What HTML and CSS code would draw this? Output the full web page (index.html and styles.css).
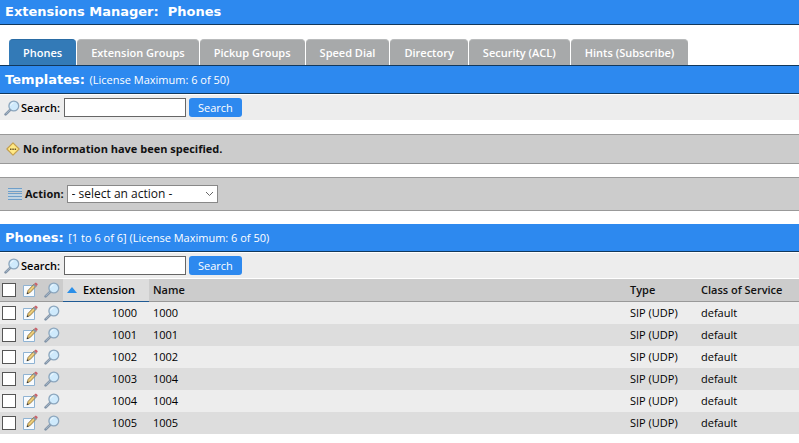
FILE: index.html
```html
<!DOCTYPE html>
<html lang="en">
<head>
  <meta charset="UTF-8" />
  <title>Extensions Manager</title>
  <link rel="stylesheet" href="styles.css">
</head>
<body>

  <!-- Shared icons -->
  <svg class="icon-defs" width="0" height="0">
    <symbol id="icon-search" viewBox="0 0 16 16">
      <path d="M1.6 14.4L6.2 9.8" stroke="#8294a8" stroke-width="2.6" stroke-linecap="round" />
      <path d="M1.8 14L6 9.8" stroke="#b3c3d2" stroke-width="0.8" />
      <circle cx="9.8" cy="6" r="4.9" fill="#cfeafc" stroke="#8ca6bd" stroke-width="1.3" />
      <path d="M6.6 5.6a3.3 3.3 0 0 1 3-2.8" fill="none" stroke="#f2faff" stroke-width="1" />
    </symbol>
    <symbol id="icon-edit" viewBox="0 0 16 16">
      <path d="M1.5 3.5h11v11h-11z" fill="#f8fbfe" stroke="#8fb3d3" />
      <path d="M5 11.8l1-3.4 6-6.4 2.2 2.1-6 6.4z" fill="#e3bd62" stroke="#7d6840" stroke-width="0.7" />
      <path d="M7.2 9.3l5.6-6" stroke="#f7e3a0" stroke-width="0.8" />
      <path d="M10.8 3.2l1.5-1.5 2.3 2.3-1.5 1.5z" fill="#8c98a4" />
      <path d="M12.2 1.8l0.9-0.9q0.7-0.6 1.4 0l0.9 0.9q0.6 0.7 0.1 1.3l-0.9 1z" fill="#c9606a" />
      <path d="M4.7 12.2l0.6-2 1.5 1.4z" fill="#333" />
    </symbol>
  </svg>

  <h1 class="bar page-title">Extensions Manager:&nbsp; Phones</h1>

  <nav class="tabs">
    <a class="tab active" href="#phones">Phones</a>
    <a class="tab" href="#groups">Extension Groups</a>
    <a class="tab" href="#pickup">Pickup Groups</a>
    <a class="tab" href="#speed-dial">Speed Dial</a>
    <a class="tab" href="#directory">Directory</a>
    <a class="tab" href="#security">Security (ACL)</a>
    <a class="tab" href="#hints">Hints (Subscribe)</a>
  </nav>

  <!-- Templates Section -->
  <section class="templates">
    <h2 class="bar">Templates: <span class="info">(License Maximum: 6 of 50)</span></h2>
    <form class="search">
      <svg class="icon"><use href="#icon-search" /></svg>
      <label for="template-search">Search:</label>
      <input type="text" id="template-search" />
      <button type="submit">Search</button>
    </form>
    <div class="message">
      <svg class="icon-note" viewBox="0 0 14 14">
        <path d="M7 0.9L13.1 7 7 13.1 0.9 7z" fill="#ffe985" stroke="#c6a04c" stroke-width="1.2" stroke-linejoin="round" />
        <path d="M4 6.4h1.5v1.5H4zM6.3 6.4h1.5v1.5H6.3zM8.6 6.4h1.5v1.5H8.6z" fill="#6b5526" />
      </svg>
      <span>No information have been specified.</span>
    </div>
    <div class="action">
      <svg class="icon-list" viewBox="0 0 14 12">
        <path d="M0 0.5h14M0 3.5h14M0 5.5h14M0 8.5h14M0 11.5h14" stroke="#6f9fc9" />
        <path d="M0 1.5h14v1H0zM0 6.5h14v1H0zM0 9.5h14v1H0z" fill="#b5d9f5" />
      </svg>
      <label for="action">Action:</label>
      <span class="select-wrap">
        <select id="action">
          <option>- select an action -</option>
        </select>
        <svg class="chevron" viewBox="0 0 9 6"><path d="M1 1l3.5 3.5L8 1" fill="none" stroke="#666" /></svg>
      </span>
    </div>
  </section>

  <!-- Phones Section -->
  <section class="phones">
    <h2 class="bar">Phones: <span class="info">[1 to 6 of 6] (License Maximum: 6 of 50)</span></h2>
    <form class="search">
      <svg class="icon"><use href="#icon-search" /></svg>
      <label for="phone-search">Search:</label>
      <input type="text" id="phone-search" />
      <button type="submit">Search</button>
    </form>
    <table>
      <thead>
        <tr>
          <th class="tools"><div><input type="checkbox" aria-label="Select all" /><svg class="icon"><use href="#icon-edit" /></svg><svg class="icon"><use href="#icon-search" /></svg></div></th>
          <th class="ext sorted"><div><svg class="sort" viewBox="0 0 10 6"><path d="M0 6l5-6 5 6z" fill="#2b8fe8" /></svg>Extension</div></th>
          <th class="name">Name</th>
          <th class="type">Type</th>
          <th class="service">Class of Service</th>
        </tr>
      </thead>
      <tbody>
        <tr>
          <td class="tools"><div><input type="checkbox" aria-label="Select 1000" /><svg class="icon"><use href="#icon-edit" /></svg><svg class="icon"><use href="#icon-search" /></svg></div></td>
          <td class="ext">1000</td><td>1000</td><td>SIP (UDP)</td><td>default</td>
        </tr>
        <tr>
          <td class="tools"><div><input type="checkbox" aria-label="Select 1001" /><svg class="icon"><use href="#icon-edit" /></svg><svg class="icon"><use href="#icon-search" /></svg></div></td>
          <td class="ext">1001</td><td>1001</td><td>SIP (UDP)</td><td>default</td>
        </tr>
        <tr>
          <td class="tools"><div><input type="checkbox" aria-label="Select 1002" /><svg class="icon"><use href="#icon-edit" /></svg><svg class="icon"><use href="#icon-search" /></svg></div></td>
          <td class="ext">1002</td><td>1002</td><td>SIP (UDP)</td><td>default</td>
        </tr>
        <tr>
          <td class="tools"><div><input type="checkbox" aria-label="Select 1003" /><svg class="icon"><use href="#icon-edit" /></svg><svg class="icon"><use href="#icon-search" /></svg></div></td>
          <td class="ext">1003</td><td>1004</td><td>SIP (UDP)</td><td>default</td>
        </tr>
        <tr>
          <td class="tools"><div><input type="checkbox" aria-label="Select 1004" /><svg class="icon"><use href="#icon-edit" /></svg><svg class="icon"><use href="#icon-search" /></svg></div></td>
          <td class="ext">1004</td><td>1004</td><td>SIP (UDP)</td><td>default</td>
        </tr>
        <tr>
          <td class="tools"><div><input type="checkbox" aria-label="Select 1005" /><svg class="icon"><use href="#icon-edit" /></svg><svg class="icon"><use href="#icon-search" /></svg></div></td>
          <td class="ext">1005</td><td>1005</td><td>SIP (UDP)</td><td>default</td>
        </tr>
      </tbody>
    </table>
  </section>

</body>
</html>
```
FILE: styles.css
```css
* {
  box-sizing: border-box;
}
body {
  margin: 0;
  background: #fff;
  color: #111;
  font-family: "Open Sans", "Noto Sans", sans-serif;
  font-size: 11px;
  line-height: 16px;
}
.icon-defs {
  display: block;
}
.icon {
  width: 16px;
  height: 16px;
  flex: none;
}

/* Blue title bars */
.bar {
  margin: 0;
  padding: 6px 5px 5px;
  background: #2d89ef;
  border-bottom: 1px solid #12385c;
  color: #fff;
  font-family: "DejaVu Sans", Verdana, sans-serif;
  font-size: 13px;
  font-weight: bold;
  line-height: 16px;
}
.page-title {
  padding: 4px 5px;
}
.info {
  font-family: "Open Sans", "Noto Sans", sans-serif;
  font-size: 11px;
  font-weight: normal;
}

/* Tabs */
.tabs {
  display: flex;
  gap: 1px;
  margin-top: 14px;
  padding-left: 9px;
  border-bottom: 1px solid #12385c;
}
.tab {
  padding: 5px 14px 4px;
  background: #a7a9aa;
  border-top: 1px solid #b9bbbc;
  border-radius: 4px 4px 0 0;
  color: #fff;
  font-weight: 600;
  text-decoration: none;
  white-space: nowrap;
}
.tab.active {
  background: #337ab7;
  border-top-color: #2a6ca5;
}

/* Search rows */
.search {
  display: flex;
  align-items: center;
  height: 25px;
  margin-top: 1px;
  padding-left: 4px;
  background: #ededed;
}
.search label {
  width: 44px;
  padding-left: 1px;
  color: #000;
  font-weight: 600;
}
.search input {
  width: 122px;
  height: 19px;
  border: 1px solid #666;
  background: #fff;
}
.search button {
  height: 19px;
  margin-left: 3px;
  padding: 0 9px;
  background: #2d89ef;
  border: none;
  border-radius: 3px;
  color: #fff;
  font: inherit;
}

/* Message and action rows */
.message, .action {
  display: flex;
  align-items: center;
  margin: 14px 0 13px;
  background: #ccc;
  border: solid #999;
  border-width: 1px 0;
  font-weight: bold;
}
.message {
  height: 30px;
  gap: 3px;
  padding-left: 6px;
}
.icon-note {
  width: 14px;
  height: 14px;
}
.action {
  height: 34px;
  gap: 3px;
  margin-top: 0;
  padding-left: 8px;
}
.icon-list {
  width: 14px;
  height: 12px;
}
.select-wrap {
  position: relative;
  display: flex;
}
select {
  appearance: none;
  width: 151px;
  height: 18px;
  padding: 0 4px;
  background: #fff;
  border: 1px solid #888;
  border-radius: 0;
  color: #111;
  font: inherit;
  font-size: 12px;
  font-weight: normal;
}
.chevron {
  position: absolute;
  top: 6px;
  right: 4px;
  width: 9px;
  height: 6px;
}

/* Phones table */
table {
  width: 100%;
  margin-top: 1px;
  border-collapse: separate;
  border-spacing: 0;
  table-layout: fixed;
}
th, td {
  height: 22px;
  padding: 0 4px;
  text-align: left;
  white-space: nowrap;
}
th {
  height: 23px;
  background: #ccc;
  border-bottom: 1px solid #999;
  font-weight: 600;
}
td {
  color: #000;
}
tbody tr {
  background: #ededed;
}
tbody tr:nth-child(even) {
  background: #ddd;
}
.tools {
  width: 63px;
  padding: 0 2px;
}
.tools div {
  display: flex;
  align-items: center;
  gap: 6px;
}
.tools input {
  appearance: none;
  width: 14px;
  height: 14px;
  margin: 0;
  background: #fff;
  border: 1px solid #555;
}
.ext {
  width: 86px;
}
td.ext {
  padding-right: 12px;
  text-align: right;
}
th.sorted {
  background: #ddd;
  border-bottom-color: #1f5a94;
  color: #000;
}
.sorted div {
  display: flex;
  align-items: center;
  gap: 6px;
}
.sort {
  width: 10px;
  height: 6px;
}
.type {
  width: 71px;
}
.service {
  width: 102px;
}
```
